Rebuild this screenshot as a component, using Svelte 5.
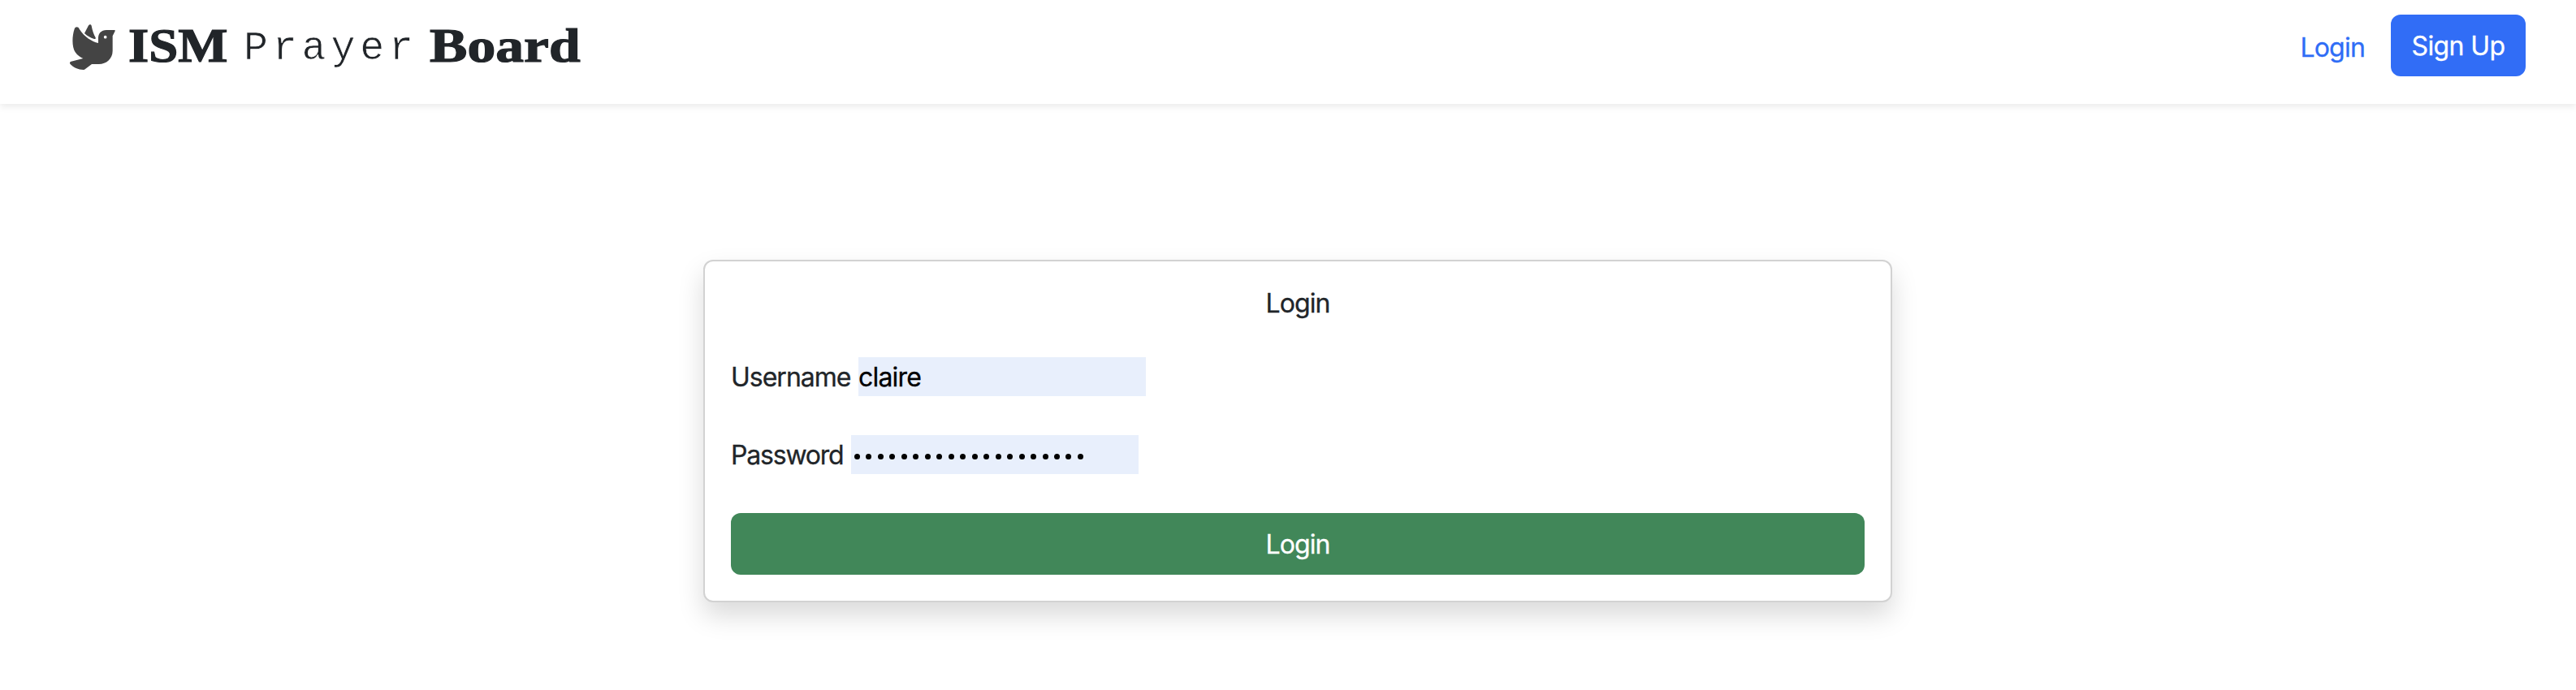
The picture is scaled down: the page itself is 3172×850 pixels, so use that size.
<script>
  let username = $state('claire');
  const dots = Array.from({ length: 20 });
</script>

<header>
  <a class="brand" href="#home" aria-label="ISM Prayer Board">
    <svg class="dove" viewBox="78 90 168 168">
      <path d="M183 159C159 153 132 137 113 107C109 98 99 97 95 107C86 134 85 173 98 193C106 205 117 212 127 216L83 227C78 228 77 232 79 236C91 249 109 257 129 258Q132 258 135 255L159 237H185C213 237 236 216 236 188V133L245 115Q247 111 242 111H213C194 111 183 124 183 141Z" />
      <path d="M132 123L146 96C149 89 156 89 158 95C161 113 167 128 173 139C174 143 172 145 168 144C154 139 141 133 132 123Z" />
      <circle cx="209" cy="137" r="5.5" />
    </svg>
    <span class="word ism"><b>ISM</b></span>
    <span class="word prayer"><span>Prayer</span></span>
    <span class="word board"><b>Board</b></span>
  </a>
  <nav>
    <a class="link" href="#login">Login</a>
    <a class="signup" href="#signup">Sign Up</a>
  </nav>
</header>

<main>
  <form class="card">
    <div class="title">Login</div>
    <div class="row">
      <label for="user">Username</label>
      <input id="user" bind:value={username} />
    </div>
    <div class="row second">
      <span class="pw">Password</span>
      <div class="field">
        {#each dots as _}<i></i>{/each}
      </div>
    </div>
    <button type="button">Login</button>
  </form>
</main>

<style>
  :global(body) {
    margin: 0;
    background: #fff;
    color: #212529;
    font: 32px/48px Inter, sans-serif;
  }
  a { text-decoration: none; }
  header {
    height: 128px;
    box-sizing: border-box;
    padding: 18px 62px 0 86px;
    display: flex;
    justify-content: space-between;
    align-items: flex-start;
    background: #fff;
    box-shadow: 0 4px 8px rgba(0, 0, 0, 0.075);
  }
  .brand {
    display: flex;
    color: #212529;
    height: 76px;
  }
  .dove {
    width: 56px;
    height: 56px;
    margin: 12px 16px 0 0;
    fill: #444;
  }
  .dove circle { fill: #fff; }
  .word {
    display: block;
    white-space: nowrap;
    font: 60px/76px "Liberation Serif", serif;
  }
  .word > * {
    display: inline-block;
    transform-origin: 0 0;
  }
  .word b { -webkit-text-stroke: 1.2px #212529; }
  .ism { width: 142px; }
  .ism b { transform: scaleX(1.08); }
  .prayer {
    width: 229px;
    padding-top: 4px;
    font-family: "Liberation Mono", monospace;
    font-size: 50px;
    letter-spacing: 5.8px;
  }
  .prayer span { -webkit-text-stroke: 0.7px #fff; }
  .board b { transform: scaleX(1.16); }
  nav {
    display: flex;
    gap: 32px;
    -webkit-text-stroke: 0.3px;
  }
  .link {
    color: #2f6df6;
    padding-top: 17px;
    letter-spacing: -0.8px;
  }
  .signup {
    width: 166px;
    height: 76px;
    line-height: 77px;
    text-align: center;
    color: #fff;
    background: #316df6;
    border-radius: 12px;
    letter-spacing: -0.6px;
  }
  main {
    padding: 192px 0 80px 866px;
  }
  .card {
    width: 1464px;
    height: 422px;
    box-sizing: border-box;
    padding: 28px 32px 32px;
    border: 2px solid #d2d2d2;
    border-radius: 12px;
    background: #fff;
    box-shadow: 0 16px 32px rgba(0, 0, 0, 0.15);
    letter-spacing: -0.9px;
    -webkit-text-stroke: 0.3px;
  }
  .title {
    text-align: center;
    height: 48px;
  }
  .row {
    display: flex;
    height: 48px;
    margin-top: 42px;
  }
  .second { margin-top: 48px; }
  label {
    width: 157px;
    padding-top: 1px;
    letter-spacing: -1px;
  }
  .pw {
    width: 148px;
    padding-top: 1px;
    letter-spacing: -1.2px;
  }
  input, .field {
    width: 354px;
    height: 48px;
    box-sizing: border-box;
    border: 0;
    padding: 0;
    background: #e8effc;
  }
  input {
    padding-top: 2px;
    font: inherit;
    color: #000;
    letter-spacing: -0.8px;
    outline: none;
  }
  .field {
    display: flex;
    align-items: center;
    gap: 7.47px;
    padding: 5px 0 0 4px;
  }
  i {
    width: 7px;
    height: 7px;
    flex: none;
    border-radius: 50%;
    background: #000;
  }
  button {
    display: block;
    width: 1396px;
    height: 76px;
    margin-top: 48px;
    padding: 2px 0 0;
    border: 0;
    border-radius: 12px;
    background: #418759;
    color: #fff;
    font: inherit;
    letter-spacing: -0.9px;
  }
</style>
